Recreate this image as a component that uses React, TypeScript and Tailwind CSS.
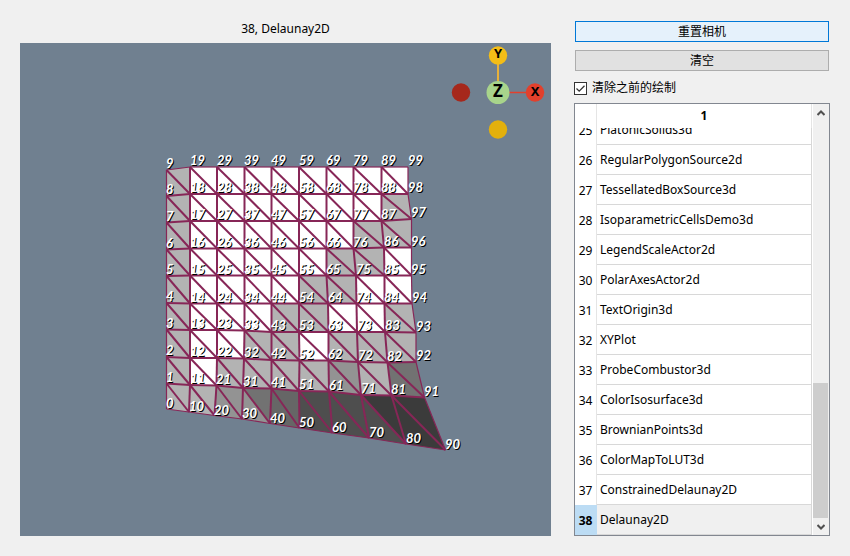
import { useLayoutEffect, useRef, useState } from "react";

type Point = [number, number];

// Mesh points by column; the id of a point is column * 10 + index.
const COLUMNS: Point[][] = [
  [[166.5, 409], [166.5, 383.5], [166.5, 357], [166.5, 329.5], [166.5, 303], [166.5, 276], [166.5, 249.5], [166.5, 222.5], [166.5, 196], [166.5, 170]],
  [[189, 412], [190, 385], [190, 358], [190, 330], [190, 303.5], [190, 275.5], [190, 248.5], [190, 221], [190, 194], [190, 167]],
  [[214.5, 415.5], [216.5, 385.5], [217, 358], [217, 330], [217, 303.5], [217, 275.5], [217, 248.5], [217, 221], [217, 194], [217, 167]],
  [[242, 419], [243, 388], [244, 358.5], [244.5, 330.5], [244.5, 303.5], [244.5, 275.5], [244.5, 248.5], [244.5, 221], [244.5, 194], [244.5, 167]],
  [[270, 423.5], [271.5, 388.5], [271.5, 360], [271.5, 332], [271.5, 303.5], [271.5, 275.5], [271.5, 248.5], [271.5, 221], [271.5, 194], [271.5, 167]],
  [[299.5, 428], [299, 391], [299.5, 360.5], [299, 332], [299, 303.5], [299, 275.5], [299, 248.5], [299, 221], [299, 194], [299, 167]],
  [[332.5, 433], [329, 391.5], [328.5, 360.5], [328.5, 332], [328, 303.5], [326.5, 275.5], [326.5, 248.5], [326.5, 221], [326.5, 194], [326.5, 167]],
  [[369, 438], [361, 395], [358, 362], [357, 332], [356.5, 303.5], [356, 275.5], [353.5, 248.5], [353.5, 221], [353.5, 194], [353.5, 167]],
  [[406, 444], [391.5, 395.5], [387.5, 362.5], [385, 332], [384.5, 303.5], [384.5, 275.5], [384, 247.5], [381.5, 221], [381.5, 194], [381.5, 167]],
  [[445.5, 450], [424.5, 397.5], [416, 362], [416, 332.5], [412, 303.5], [411.5, 275.5], [411.5, 247.5], [411.5, 219], [408, 194], [408, 167]],
];

const W = "#ffffff";
const A = "#b3b3b3";
const B = "#939393";
const C = "#727272";
const D = "#666666";
const E = "#4e4e4e";
const F = "#3b3b3b";

// Shade of each cell: [lower triangle, upper triangle] or one for both.
const SHADES: (string | [string, string])[][] = [
  [A, A, B, [B, C], D, E, E, [E, F], F],
  [A, W, A, A, A, A, B, A, C],
  [A, W, W, A, A, W, A, A, A],
  [A, W, W, W, A, A, W, W, A],
  [A, W, W, W, W, A, A, W, W],
  [A, W, W, W, W, W, A, A, W],
  [A, W, W, W, W, W, W, A, A],
  [A, W, W, W, W, W, W, W, A],
  [A, W, W, W, W, W, W, W, W],
];

const toPoints = (...points: Point[]) => points.map((p) => p.join(",")).join(" ");

function Mesh() {
  const faces = [];
  const edges = [];
  const labels = [];
  for (let c = 0; c < 10; c++) {
    for (let r = 0; r < 10; r++) {
      const p = COLUMNS[c][r];
      const right = COLUMNS[c + 1]?.[r];
      const up = COLUMNS[c][r + 1];
      if (right && up) {
        const shade = SHADES[r][c];
        const [lower, upper] = typeof shade === "string" ? [shade, shade] : shade;
        const corner = COLUMNS[c + 1][r + 1];
        faces.push(<polygon key={`l${c}-${r}`} points={toPoints(p, right, up)} fill={lower} />);
        faces.push(<polygon key={`u${c}-${r}`} points={toPoints(right, corner, up)} fill={upper} />);
        edges.push(<polyline key={`d${c}-${r}`} points={toPoints(up, right)} strokeWidth={2} />);
      }
      if (right) {
        edges.push(<polyline key={`h${c}-${r}`} points={toPoints(p, right)} strokeWidth={r === 0 || r === 9 ? 1.2 : 2} />);
      }
      if (up) {
        edges.push(<polyline key={`v${c}-${r}`} points={toPoints(p, up)} strokeWidth={c === 0 || c === 9 ? 1.2 : 2} />);
      }
      const x = Math.floor(p[0]);
      const y = Math.round(p[1]) - (r === 0 ? 1 : 2);
      labels.push(
        <g key={`t${c}-${r}`}>
          <text x={x + 1} y={y + 1} fill="#000000">{c * 10 + r}</text>
          <text x={x} y={y} fill="#ffffff">{c * 10 + r}</text>
        </g>
      );
    }
  }
  return (
    <svg className="block h-full w-full" viewBox="20 43 531 493" role="img" aria-label="Delaunay2D">
      {faces}
      <g stroke="#872657" fill="none">{edges}</g>
      <g className="font-['Lato',sans-serif] text-[13px] font-bold italic">{labels}</g>
    </svg>
  );
}

function AxesGizmo() {
  return (
    <svg className="absolute top-0 right-1 h-[98px] w-[98px]" viewBox="0 0 98 98" aria-hidden="true">
      <path d="M49 49V13" stroke="#e8b13a" strokeWidth="2" />
      <path d="M49 49.5H86" stroke="#e2402c" strokeWidth="1.6" />
      <circle cx="12" cy="49.5" r="9.2" fill="#a6281c" />
      <circle cx="49" cy="86.5" r="9.2" fill="#e3b00c" />
      <circle cx="49" cy="12.5" r="9.2" fill="#f4bd17" />
      <circle cx="86" cy="49.5" r="9.2" fill="#e2402c" />
      <circle cx="49" cy="49.5" r="11.5" fill="#a8d48b" />
      <g className="font-['Noto_Sans',sans-serif] font-bold" textAnchor="middle" fill="#000000">
        <text x="49" y="15" className="text-[13px]">Y</text>
        <text x="86" y="53" className="text-[13px]">X</text>
        <text x="49" y="54" className="text-[17px]">Z</text>
      </g>
    </svg>
  );
}

const FIRST_ROW = 25;
const DEMOS = [
  "PlatonicSolids3d",
  "RegularPolygonSource2d",
  "TessellatedBoxSource3d",
  "IsoparametricCellsDemo3d",
  "LegendScaleActor2d",
  "PolarAxesActor2d",
  "TextOrigin3d",
  "XYPlot",
  "ProbeCombustor3d",
  "ColorIsosurface3d",
  "BrownianPoints3d",
  "ColorMapToLUT3d",
  "ConstrainedDelaunay2D",
  "Delaunay2D",
];

function DemoTable({ selected, onSelect }: { selected: number; onSelect: (row: number) => void }) {
  const scroller = useRef<HTMLDivElement>(null);
  useLayoutEffect(() => {
    if (scroller.current) scroller.current.scrollTop = scroller.current.scrollHeight;
  }, []);
  const scrollBy = (top: number) => scroller.current?.scrollBy({ top });

  return (
    <div className="flex min-h-0 flex-1 border border-[#828790] bg-white">
      <div ref={scroller} className="min-w-0 flex-1 overflow-hidden">
        <table className="w-full table-fixed border-separate border-spacing-0">
          <colgroup>
            <col className="w-[22px]" />
            <col />
          </colgroup>
          <thead>
            <tr className="h-6">
              <th className="sticky top-0 border-r border-[#e5e5e5] bg-white p-0" />
              <th className="sticky top-0 border-r border-[#e5e5e5] bg-white p-0 text-center font-bold">1</th>
            </tr>
          </thead>
          <tbody>
            {DEMOS.map((name, i) => {
              const row = FIRST_ROW + i;
              const active = row === selected;
              return (
                <tr key={name} className="h-[30px]" onClick={() => onSelect(row)}>
                  <th
                    scope="row"
                    className={`border-r px-0 pt-0.5 pb-0 text-center ${active ? "border-[#bcdcf4] bg-[#bcdcf4] font-bold" : "border-[#e5e5e5] font-normal"}`}
                  >
                    {row}
                  </th>
                  <td className={`border-r border-b border-[#d8d8d8] py-0 pr-0 pl-[3px] ${active ? "bg-[#f0f0f0]" : ""}`}>
                    {name}
                  </td>
                </tr>
              );
            })}
          </tbody>
        </table>
      </div>
      <div className="ml-px flex w-4 flex-col bg-[#f0f0f0]">
        <button type="button" aria-label="Scroll up" className="flex h-[17px] items-center justify-center" onClick={() => scrollBy(-30)}>
          <svg className="h-2 w-2" viewBox="0 0 8 8">
            <path d="M0.5 6L4 2.5L7.5 6" fill="none" stroke="#505050" strokeWidth="2" />
          </svg>
        </button>
        <div className="flex min-h-0 flex-1 flex-col justify-end">
          <div className="mr-px h-[34%] bg-[#cdcdcd]" />
        </div>
        <button type="button" aria-label="Scroll down" className="flex h-[17px] items-center justify-center" onClick={() => scrollBy(30)}>
          <svg className="h-2 w-2" viewBox="0 0 8 8">
            <path d="M0.5 2L4 5.5L7.5 2" fill="none" stroke="#505050" strokeWidth="2" />
          </svg>
        </button>
      </div>
    </div>
  );
}

export default function App() {
  const [selected, setSelected] = useState(38);
  const [clearFirst, setClearFirst] = useState(true);

  return (
    <div className="flex h-screen gap-[23px] bg-[#f0f0f0] p-5 font-['Noto_Sans','Noto_Sans_CJK_SC',sans-serif] text-[12px] leading-4 text-black">
      <main className="flex min-w-0 flex-1 flex-col gap-[6px]">
        <h1 className="pt-px text-center">
          {selected}, {DEMOS[selected - FIRST_ROW]}
        </h1>
        <div className="relative min-h-0 flex-1 bg-[#708090]">
          <Mesh />
          <AxesGizmo />
        </div>
      </main>
      <aside className="flex w-64 shrink-0 flex-col">
        <div className="flex flex-col gap-2 px-px pt-px">
          <button type="button" className="flex h-[21px] items-center justify-center border border-[#0078d7] bg-[#e5f1fb]">
            重置相机
          </button>
          <button type="button" className="flex h-[21px] items-center justify-center border border-[#adadad] bg-[#e1e1e1]">
            清空
          </button>
        </div>
        <label className="mt-[9px] mb-[7px] flex h-4 items-center gap-[5px]">
          <span className="relative flex h-[13px] w-[13px]">
            <input
              type="checkbox"
              checked={clearFirst}
              onChange={(e) => setClearFirst(e.target.checked)}
              className="peer h-[13px] w-[13px] appearance-none border border-[#333333] bg-white"
            />
            <svg className="pointer-events-none absolute inset-0 hidden peer-checked:block" viewBox="0 0 13 13">
              <path d="M2.5 6.5L5.2 9.2L10.5 3.8" fill="none" stroke="#333333" strokeWidth="1.3" />
            </svg>
          </span>
          清除之前的绘制
        </label>
        <DemoTable selected={selected} onSelect={setSelected} />
      </aside>
    </div>
  );
}
